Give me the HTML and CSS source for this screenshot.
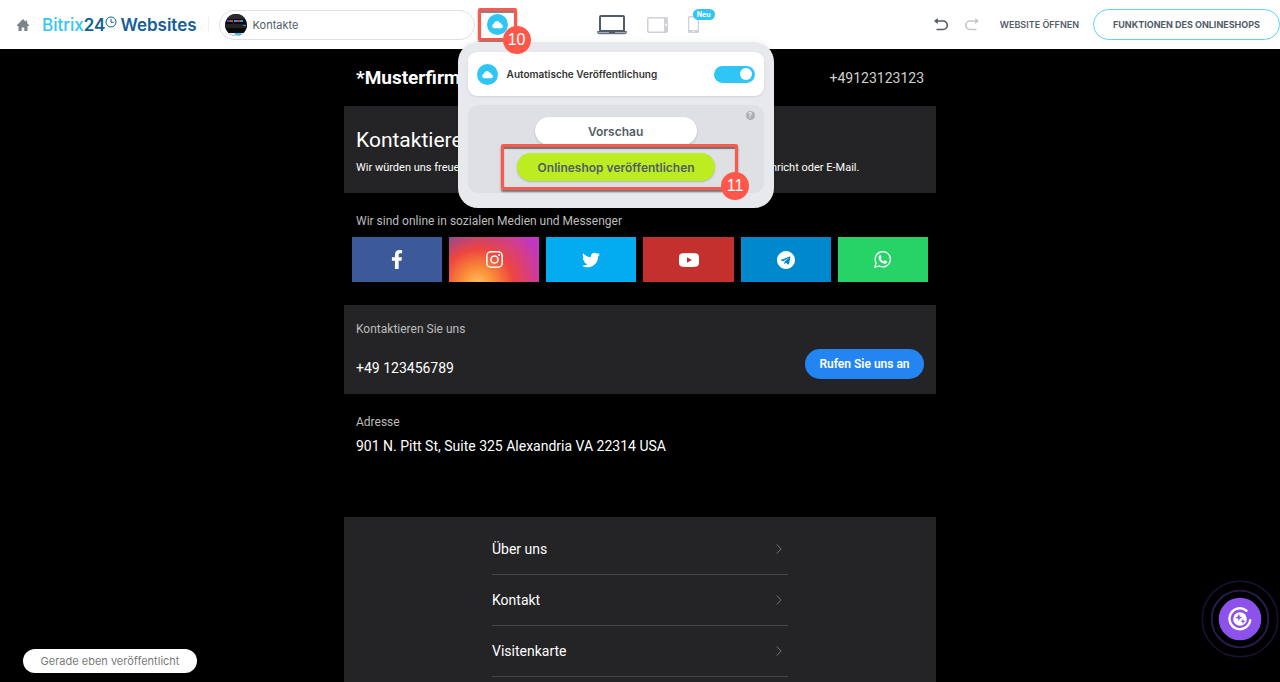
FILE: index.html
```
<!DOCTYPE html>
<html lang="de">
<head>
    <meta charset="UTF-8">
    <meta name="viewport" content="width=device-width, initial-scale=1.0">
    <title>Kontakte - Bitrix24 Websites</title>
    <link rel="stylesheet" href="styles.css">
</head>
<body>
    <header class="topbar">
        <a href="#" class="home" aria-label="Startseite">
            <svg width="12" height="12" viewBox="0 0 12 12"><path fill="#7d838d" d="M6 0 0 6v.9h1.5V12h3.2V8.4h2.6V12h3.2V6.9H12V6l-1.8-1.8V1.5H8.7v1.2z"/></svg>
        </a>
        <a href="#" class="logo">
            <span class="logo-light">Bitrix</span><span>24</span><svg class="logo-clock" width="12" height="12" viewBox="0 0 12 12" fill="none" stroke="#146096"><circle cx="6" cy="6" r="5"/><path d="M6 3v3.3h2.6"/></svg>
            <span>Websites</span>
        </a>
        <button type="button" class="page-select">
            <svg width="22" height="22" viewBox="0 0 22 22">
                <defs><clipPath id="thumb"><circle cx="11" cy="11" r="11"/></clipPath></defs>
                <g clip-path="url(#thumb)">
                    <rect width="22" height="22" fill="#0a0a0b"/>
                    <rect width="22" height="5" fill="#2b2b2d"/>
                    <path fill="#3d5a99" d="M2 6h3v2H2z"/><path fill="#e0304a" d="M5 6h3v2H5zM12 6h3v2h-3z"/><path fill="#12a4ef" d="M9 6h3v2H9zM15 6h3v2h-3z"/>
                    <rect y="10" width="22" height="4" fill="#242426"/>
                    <path fill="#2487f2" d="M18 11h3v1h-3z"/>
                    <rect y="19" width="22" height="3" fill="#e9eef2"/>
                    <path fill="#2fc6f6" d="M10 19h6v2h-6z"/>
                </g>
            </svg>
            Kontakte
        </button>

        <div class="publish">
            <button type="button" class="publish-toggle" aria-label="Veröffentlichen">
                <svg width="21" height="21" viewBox="0 0 21 21"><circle cx="10.500" cy="10.500" r="10.500" fill="#2fc6f6"/><path fill="#fff" d="M7.500 14.200a2.300 2.300 0 0 1-.7-4.500A3.100 3.100 0 0 1 12.500 8.600a2.300 2.300 0 0 1 1.900 1.900 1.900 1.900 0 0 1 .1 3.700z"/></svg>
            </button>
            <span class="mark mark-10">10</span>
            <div class="popup">
                <div class="popup-auto">
                    <svg width="21" height="21" viewBox="0 0 21 21"><circle cx="10.500" cy="10.500" r="10.500" fill="#2fc6f6"/><path fill="#fff" d="M7.500 14.200a2.300 2.300 0 0 1-.7-4.500A3.100 3.100 0 0 1 12.500 8.600a2.300 2.300 0 0 1 1.900 1.900 1.900 1.900 0 0 1 .1 3.700z"/></svg>
                    <label for="auto">Automatische Veröffentlichung</label>
                    <input type="checkbox" id="auto" class="switch" checked>
                </div>
                <div class="popup-actions">
                    <button type="button" class="help" aria-label="Hilfe">?</button>
                    <button type="button" class="btn-preview">Vorschau</button>
                    <div class="highlight">
                        <button type="button" class="btn-publish">Onlineshop veröffentlichen</button>
                        <span class="mark mark-11">11</span>
                    </div>
                </div>
            </div>
        </div>

        <div class="devices">
            <button type="button" aria-label="Desktop">
                <svg width="30" height="20" viewBox="0 0 30 20"><rect x="3" y="1" width="24" height="15" rx="1" fill="#fff" stroke="#525c69" stroke-width="2"/><path fill="#a8adb4" stroke="#525c69" d="M.7 16.500h28.600v1.200q0 1-1.500 1H2.200q-1.500 0-1.500-1z"/><path stroke="#525c69" d="M12 17.500h6"/></svg>
            </button>
            <button type="button" aria-label="Tablet">
                <svg width="21" height="16" viewBox="0 0 21 16"><path fill="#ced1d5" fill-rule="evenodd" d="M2 0h17q2 0 2 2v12q0 2-2 2H2q-2 0-2-2V2q0-2 2-2zm-.5 1.500v13H17v-13zM19 7a1 1 0 1 0 0 2 1 1 0 0 0 0-2z"/></svg>
            </button>
            <button type="button" class="phone" aria-label="Smartphone">
                <svg width="11" height="17" viewBox="0 0 11 17"><path fill="#ced1d5" fill-rule="evenodd" d="M1.500 0h8Q11 0 11 1.500v14q0 1.500-1.500 1.500h-8Q0 17 0 15.500v-14Q0 0 1.500 0zm-.2 1.500V14h8.400V1.500zm4.200 13.200a.8.8 0 1 0 0 1.600.8.8 0 0 0 0-1.600z"/></svg>
                <span class="new">Neu</span>
            </button>
        </div>

        <div class="tools">
            <button type="button" aria-label="Rückgängig">
                <svg width="14" height="13" viewBox="0 0 14 13" fill="none" stroke="#525c69" stroke-width="1.600"><path d="M2 3h7a4 4 0 0 1 0 8.500H2.500"/><path fill="#525c69" stroke="none" d="M0 3 3.800 0v6z"/></svg>
            </button>
            <button type="button" aria-label="Wiederholen">
                <svg width="14" height="13" viewBox="0 0 14 13" fill="none" stroke="#c3c7cc" stroke-width="1.600"><path d="M12 3H5a4 4 0 0 0 0 8.500h6.500"/><path fill="#c3c7cc" stroke="none" d="M14 3 10.200 0v6z"/></svg>
            </button>
            <a href="#" class="open-site">WEBSITE ÖFFNEN</a>
            <button type="button" class="btn-features">FUNKTIONEN DES ONLINESHOPS</button>
        </div>
    </header>

    <main class="page">
        <div class="company">
            <h1>*Musterfirma</h1>
            <a href="tel:+49123123123">+49123123123</a>
        </div>

        <section class="panel intro">
            <h2>Kontaktieren Sie uns</h2>
            <p>Wir würden uns freuen, wenn Sie uns kontaktieren. Schicken Sie uns einfach eine Nachricht oder E-Mail.</p>
        </section>

        <section class="social">
            <h3>Wir sind online in sozialen Medien und Messenger</h3>
            <div class="social-list">
                <a href="#" class="facebook" aria-label="Facebook">
                    <svg width="12" height="19" viewBox="0 0 320 512"><path fill="#fff" d="M279.14 288l14.22-92.66h-88.91v-60.13c0-25.35 12.42-50.06 52.24-50.06h40.42V6.26S260.43 0 225.36 0c-73.22 0-121.08 44.38-121.08 124.72v70.62H22.89V288h81.39v224h100.17V288z"/></svg>
                </a>
                <a href="#" class="instagram" aria-label="Instagram">
                    <svg width="17" height="17" viewBox="0 0 17 17" fill="none" stroke="#fff" stroke-width="1.500"><rect x=".8" y=".8" width="15.400" height="15.400" rx="4.300"/><circle cx="8.500" cy="8.500" r="3.600"/><circle cx="13" cy="4" r="1" fill="#fff" stroke="none"/></svg>
                </a>
                <a href="#" class="twitter" aria-label="Twitter">
                    <svg width="18" height="18" viewBox="0 0 512 512"><path fill="#fff" d="M459.370 151.716c.325 4.548.325 9.097.325 13.645 0 138.720-105.583 298.558-298.558 298.558-59.452 0-114.680-17.219-161.137-47.106 8.447.974 16.568 1.299 25.340 1.299 49.055 0 94.213-16.568 130.274-44.832-46.132-.975-84.792-31.188-98.112-72.772 6.498.974 12.995 1.624 19.818 1.624 9.421 0 18.843-1.300 27.614-3.573-48.081-9.747-84.143-51.980-84.143-102.985v-1.299c13.969 7.797 30.214 12.670 47.431 13.319-28.264-18.843-46.781-51.005-46.781-87.391 0-19.492 5.197-37.360 14.294-52.954 51.655 63.675 129.300 105.258 216.365 109.807-1.624-7.797-2.599-15.918-2.599-24.040 0-57.828 46.782-104.934 104.934-104.934 30.213 0 57.502 12.670 76.670 33.137 23.715-4.548 46.456-13.320 66.599-25.340-7.798 24.366-24.366 44.833-46.132 57.827 21.117-2.273 41.584-8.122 60.426-16.243-14.292 20.791-32.161 39.308-52.628 54.253z"/></svg>
                </a>
                <a href="#" class="youtube" aria-label="YouTube">
                    <svg width="20" height="14" viewBox="0 0 20 14"><path fill="#fff" fill-rule="evenodd" d="M4 .3Q10-.2 16 .3q4 0 4 3.700v6q0 3.700-4 3.700-6 .5-12 0-4 0-4-3.700V4Q0 .3 4 .3zM8 4.200v5.600L13 7z"/></svg>
                </a>
                <a href="#" class="telegram" aria-label="Telegram">
                    <svg width="18" height="18" viewBox="0 8 496 496"><path fill="#fff" d="M248 8C111 8 0 119 0 256s111 248 248 248 248-111 248-248S385 8 248 8zm121.800 169.900l-40.700 191.800c-3 13.600-11.100 16.900-22.400 10.500l-62-45.700-29.900 28.800c-3.300 3.300-6.100 6.100-12.500 6.100l4.400-63.100 114.900-103.800c5-4.400-1.100-6.900-7.700-2.500l-142 89.400-61.200-19.100c-13.300-4.200-13.600-13.300 2.800-19.700l239.100-92.200c11.100-4 20.800 2.700 17.200 19.500z"/></svg>
                </a>
                <a href="#" class="whatsapp" aria-label="WhatsApp">
                    <svg width="17" height="17" viewBox="0 0 17 17"><path fill="none" stroke="#fff" stroke-width="1.300" d="M.9 16.100l1.200-4.200a7.600 7.600 0 1 1 3 3z"/><path fill="#fff" d="M5.600 4.200q.8-.5 1.200.2l.7 1.600q.2.500-.9 1.500 1 2 3.100 2.900 1-1.300 1.500-1l1.700.8q.5.300.1 1.300-.8 1.500-2.900 1.100Q6 11.500 4.700 7.700q-.6-2.100.9-3.500z"/></svg>
                </a>
            </div>
        </section>

        <section class="panel call">
            <div>
                <h3>Kontaktieren Sie uns</h3>
                <p>+49 123456789</p>
            </div>
            <button type="button" class="btn-call">Rufen Sie uns an</button>
        </section>

        <section class="address">
            <h3>Adresse</h3>
            <p>901 N. Pitt St, Suite 325 Alexandria VA 22314 USA</p>
        </section>

        <nav class="panel menu">
            <a href="#">Über uns <svg width="6" height="10" viewBox="0 0 6 10" fill="none" stroke="#77777a"><path d="M.7.5 5.200 5 .7 9.500"/></svg></a>
            <a href="#">Kontakt <svg width="6" height="10" viewBox="0 0 6 10" fill="none" stroke="#77777a"><path d="M.7.5 5.200 5 .7 9.500"/></svg></a>
            <a href="#">Visitenkarte <svg width="6" height="10" viewBox="0 0 6 10" fill="none" stroke="#77777a"><path d="M.7.5 5.200 5 .7 9.500"/></svg></a>
        </nav>
    </main>

    <div class="status">Gerade eben veröffentlicht</div>

    <button type="button" class="copilot" aria-label="CoPilot">
        <svg width="78" height="78" viewBox="0 0 78 78" fill="none">
            <circle cx="39" cy="39" r="37.800" stroke="#1c1033" stroke-width="1.600"/>
            <circle cx="39" cy="39" r="28.300" stroke="#2d1a52" stroke-width="1.800"/>
            <circle cx="39" cy="39" r="21.300" fill="#8e52ec"/>
            <path stroke="#fff" stroke-width="2.400" stroke-linecap="round" d="M45.500 30.700a10.400 10.400 0 1 0 3.700 9.600"/>
            <circle cx="39" cy="39" r="6.800" fill="#fff"/>
            <path fill="#8e52ec" d="M37.800 33.800l1 2.600 2.600 1-2.600 1-1 2.600-1-2.600-2.600-1 2.600-1zM42 38.700l.7 1.900 1.900.7-1.900.7-.7 1.900-.7-1.900-1.900-.7 1.900-.7z"/>
        </svg>
    </button>
</body>
</html>
```
FILE: styles.css
```
* {
    box-sizing: border-box;
}
body {
    display: flex;
    flex-direction: column;
    min-height: 100vh;
    margin: 0;
    background: #000;
    color: #fff;
    font-family: Roboto, sans-serif;
}
h1, h2, h3, p {
    margin: 0;
    font-weight: 400;
}
a {
    color: inherit;
    text-decoration: none;
}
button {
    padding: 0;
    border: none;
    background: none;
    color: inherit;
    font-family: inherit;
    cursor: pointer;
}
svg {
    display: block;
    flex: none;
}

/* top bar */
.topbar {
    position: relative;
    z-index: 2;
    display: flex;
    flex: none;
    align-items: center;
    height: 49px;
    padding-left: 17px;
    background: #fff;
    color: #525c69;
    font-family: Inter, sans-serif;
    white-space: nowrap;
}
.logo {
    display: flex;
    align-items: center;
    height: 16px;
    margin-left: 13px;
    padding-right: 11px;
    border-right: 1px solid #eef0f2;
    color: #146096;
    font-size: 17px;
    font-weight: 600;
}
.logo-light {
    color: #2fc6f6;
    font-weight: 500;
}
.logo-clock {
    margin: 0 3px 5px 0;
}
.page-select {
    display: flex;
    align-items: center;
    gap: 6px;
    width: 256px;
    height: 30px;
    margin-left: 10px;
    padding-left: 5px;
    border: 1px solid #dfe0e3;
    border-radius: 15px;
    font-size: 11px;
}
.publish {
    position: relative;
    margin-left: 3px;
}
.publish-toggle {
    display: flex;
    align-items: center;
    justify-content: center;
    width: 39px;
    height: 33px;
    border: 3px solid #fb594d;
    border-radius: 2px;
    box-shadow: 0 2px 2px rgba(0,0,0,0.5), inset 0 2px 1px rgba(0,0,0,0.5);
}
.mark {
    position: absolute;
    z-index: 2;
    width: 28px;
    height: 28px;
    border-radius: 50%;
    background: #ff584b;
    color: #fff;
    font-family: "Liberation Sans", sans-serif;
    font-size: 16px;
    line-height: 28px;
    text-align: center;
}
.mark-10 {
    top: 18px;
    left: 25px;
}
.mark-11 {
    right: -14px;
    bottom: -13px;
}

/* publish popup */
.popup {
    position: absolute;
    top: 34px;
    left: -20px;
    width: 316px;
    padding: 10px 10px 15px;
    border-radius: 20px;
    background: #e8e9ec;
    box-shadow: 0 2px 8px rgba(0,0,0,0.1);
}
.popup-auto {
    display: flex;
    align-items: center;
    gap: 9px;
    height: 44px;
    padding: 0 9px;
    border-radius: 9px;
    background: #fff;
    box-shadow: 0 1px 2px rgba(0,0,0,0.1);
    color: #333;
    font-size: 10px;
    font-weight: 600;
}
.switch {
    appearance: none;
    display: flex;
    align-items: center;
    justify-content: flex-end;
    width: 41px;
    height: 17px;
    margin: 0 0 0 auto;
    padding: 0 3px;
    border-radius: 9px;
    background: #2fc6f6;
    cursor: pointer;
}
.switch::before {
    content: "";
    width: 12px;
    height: 12px;
    border-radius: 50%;
    background: #fff;
}
.switch:not(:checked) {
    justify-content: flex-start;
    background: #b8bdc3;
}
.popup-actions {
    position: relative;
    display: flex;
    flex-direction: column;
    align-items: center;
    height: 88px;
    margin-top: 9px;
    padding-top: 12px;
    border-radius: 10px;
    background: #dfe0e3;
}
.help {
    position: absolute;
    top: 6px;
    right: 9px;
    width: 9px;
    height: 9px;
    border-radius: 50%;
    background: #abafb5;
    color: #e6e7ea;
    font-size: 8px;
    font-weight: 700;
    line-height: 9px;
}
.btn-preview,
.btn-publish {
    height: 28px;
    border-radius: 14px;
    background: #fff;
    box-shadow: 0 1px 2px rgba(0,0,0,0.2);
    font-size: 12px;
    font-weight: 600;
}
.btn-preview {
    width: 162px;
}
.highlight {
    position: relative;
    width: 237px;
    height: 46px;
    margin: -1px 0 0 8px;
    padding: 6px 13px;
    border: 3px solid #fb594d;
    border-radius: 2px;
    box-shadow: 0 2px 2px rgba(0,0,0,0.5), inset 0 2px 1px rgba(0,0,0,0.5);
}
.btn-publish {
    width: 198px;
    background: #bbed21;
}

/* device switcher */
.devices {
    display: flex;
    align-items: center;
    gap: 20px;
    margin-left: 80px;
}
.phone {
    position: relative;
}
.new {
    position: absolute;
    top: -7px;
    left: 5px;
    width: 22px;
    border-radius: 6px;
    background: #2fc6f6;
    color: #fff;
    font-size: 7px;
    font-weight: 700;
    line-height: 11px;
}
.tools {
    display: flex;
    align-items: center;
    margin-left: auto;
    font-size: 9px;
    font-weight: 600;
}
.tools > * + * {
    margin-left: 17px;
}
.open-site {
    padding-left: 4px;
}
.tools .btn-features {
    width: 187px;
    height: 31px;
    margin-left: 14px;
    border: 1px solid #5ed2f7;
    border-radius: 16px;
    font-size: 9px;
    font-weight: 700;
}

/* site preview */
.page {
    display: flex;
    flex: 1;
    flex-direction: column;
    width: 100%;
    max-width: 592px;
    margin: 0 auto;
}
.panel {
    background: #242426;
}
.company {
    display: flex;
    align-items: center;
    justify-content: space-between;
    height: 57px;
    padding: 0 12px;
}
.company h1 {
    font-size: 19px;
    font-weight: 700;
}
.company a {
    color: #d0d0d0;
    font-size: 14px;
}
.intro {
    padding: 20px 12px 17px;
}
.intro h2 {
    font-size: 21px;
    line-height: 28px;
}
.intro p {
    margin-top: 6px;
    font-size: 11px;
    line-height: 16px;
    white-space: nowrap;
}
h3 {
    color: #bdbdbd;
    font-size: 12px;
    line-height: 16px;
}
.social {
    padding: 20px 8px 23px;
}
.social h3 {
    padding-left: 4px;
}
.social-list {
    display: grid;
    grid-template-columns: repeat(6, 1fr);
    gap: 7px;
    margin-top: 8px;
}
.social-list a {
    display: flex;
    align-items: center;
    justify-content: center;
    height: 45px;
}
.facebook {
    background: #3c5a99;
}
.instagram {
    background: radial-gradient(circle at 32% 107%, #fdc468 0%, #fa9138 20%, #ee4540 46%, transparent 88%), linear-gradient(90deg, #4b4ec8 0%, #c038bf 70%);
}
.twitter {
    background: #03abf0;
}
.youtube {
    background: #c4302d;
}
.telegram {
    background: #0088cc;
}
.whatsapp {
    background: #26d366;
}
.call {
    display: flex;
    align-items: flex-end;
    justify-content: space-between;
    padding: 16px 12px 15px;
}
.call p,
.address p {
    font-size: 14px;
    line-height: 20px;
}
.call p {
    margin: 21px 0 1px;
}
.btn-call {
    width: 119px;
    height: 30px;
    border-radius: 15px;
    background: #2385f1;
    font-size: 12px;
    font-weight: 600;
}
.address {
    padding: 20px 12px 61px;
}
.address p {
    margin-top: 6px;
}
.menu {
    display: flex;
    flex: 1;
    flex-direction: column;
    align-items: center;
    padding-top: 7px;
}
.menu a {
    display: flex;
    align-items: center;
    justify-content: space-between;
    width: 50%;
    height: 51px;
    padding-right: 6px;
    border-bottom: 1px solid #454547;
    font-size: 14px;
}

/* floating items */
.status {
    position: fixed;
    left: 23px;
    bottom: 9px;
    width: 174px;
    border-radius: 12px;
    background: #fff;
    color: #7b7b7b;
    font-family: Inter, sans-serif;
    font-size: 11px;
    line-height: 24px;
    text-align: center;
}
.copilot {
    position: fixed;
    right: 1px;
    bottom: 24px;
}
```
